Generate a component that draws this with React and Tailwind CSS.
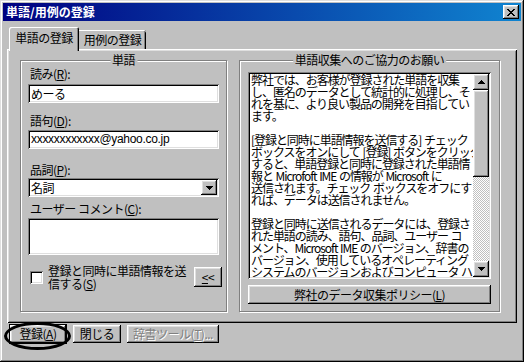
import React from 'react';

const raised =
  'bg-[#c0c0c0] shadow-[inset_-1px_-1px_#000,inset_1px_1px_#fff,inset_-2px_-2px_#808080,inset_2px_2px_#dfdfdf]';
const sunken =
  'bg-white shadow-[inset_1px_1px_#808080,inset_-1px_-1px_#fff,inset_2px_2px_#000,inset_-2px_-2px_#dfdfdf]';
const etched = 'relative border border-[#808080] shadow-[inset_1px_1px_#fff,1px_1px_#fff]';

const lines = [
  '弊社では、お客様が登録された単語を収集',
  'し、匿名のデータとして統計的に処理し、そ',
  'れを基に、より良い製品の開発を目指してい',
  'ます。',
  '',
  '[登録と同時に単語情報を送信する] チェック',
  'ボックスをオンにして [登録] ボタンをクリック',
  'すると、単語登録と同時に登録された単語情',
  '報と Microfoft IME の情報が Microsoft に',
  '送信されます。チェック ボックスをオフにす',
  'れば、データは送信されません。',
  '',
  '登録と同時に送信されるデータには、登録さ',
  'れた単語の読み、語句、品詞、ユーザー コ',
  'メント、Microsoft IME のバージョン、辞書の',
  'バージョン、使用しているオペレーティング',
  'システムのバージョンおよびコンピュータ ハ',
];

function CloseGlyph() {
  const px = [
    [0, 0], [1, 0], [6, 0], [7, 0],
    [1, 1], [2, 1], [5, 1], [6, 1],
    [2, 2], [3, 2], [4, 2], [5, 2],
    [3, 3], [4, 3],
    [2, 4], [3, 4], [4, 4], [5, 4],
    [1, 5], [2, 5], [5, 5], [6, 5],
    [0, 6], [1, 6], [6, 6], [7, 6],
  ];
  return (
    <svg width="8" height="7" viewBox="0 0 8 7" shapeRendering="crispEdges">
      {px.map(([x, y]) => (
        <rect key={`${x}-${y}`} x={x} y={y} width="1" height="1" fill="#000" />
      ))}
    </svg>
  );
}

function Arrow({ down }) {
  return (
    <svg width="7" height="4" viewBox="0 0 7 4" shapeRendering="crispEdges">
      <polygon points={down ? '0,0 7,0 3.5,4' : '3.5,0 7,4 0,4'} fill="#000" />
    </svg>
  );
}

function GroupTitle({ children }) {
  return (
    <span className="absolute top-[-8px] left-1/2 -translate-x-1/2 bg-[#c0c0c0] px-[2px] leading-[14px] whitespace-nowrap">
      {children}
    </span>
  );
}

export default function App() {
  return (
    <div className="w-[524px] h-[362px] bg-[#c0c0c0] p-[3px] flex flex-col relative overflow-hidden text-black text-[12px] tracking-[-0.5px] font-['Noto_Sans_CJK_JP',sans-serif] shadow-[inset_-1px_-1px_#000,inset_1px_1px_#dfdfdf,inset_-2px_-2px_#808080,inset_2px_2px_#fff]">
      {/* title bar */}
      <div className="h-[18px] flex items-center justify-between pl-[3px] pr-[2px] bg-[linear-gradient(to_right,#000080,#1084d0)]">
        <span className="text-white font-bold leading-[18px] tracking-[0px]">単語/用例の登録</span>
        <button className={`w-[16px] h-[14px] flex items-center justify-center ${raised}`}>
          <CloseGlyph />
        </button>
      </div>

      {/* tabs */}
      <div className="mt-[6px] mx-[4px] h-[22px] pl-[2px] flex items-end relative z-10">
        <div className="w-[70px] h-[24px] -mb-[2px] bg-[#c0c0c0] rounded-t-[2px] flex justify-center pt-[4px] leading-[14px] shadow-[inset_1px_1px_#fff,inset_-1px_0_#000,inset_-2px_0_#808080]">
          単語の登録
        </div>
        <div className="w-[67px] h-[19px] bg-[#c0c0c0] rounded-tr-[2px] flex justify-center pt-[3px] leading-[14px] shadow-[inset_0_1px_#fff,inset_-1px_0_#000,inset_-2px_0_#808080]">
          用例の登録
        </div>
      </div>

      {/* panel */}
      <div className="mx-[4px] h-[274px] bg-[#c0c0c0] flex pl-[13px] pt-[11px] gap-[12px] shadow-[inset_1px_1px_#fff,inset_-1px_-1px_#000,inset_2px_2px_#dfdfdf,inset_-2px_-2px_#808080]">
        {/* left group */}
        <div className={`${etched} w-[207px] h-[252px] px-[7px] flex flex-col`}>
          <GroupTitle>単語</GroupTitle>
          <label className="mt-[6px] pl-[2px] leading-[14px]">
            読み(<u>R</u>):
          </label>
          <div className={`${sunken} mt-[3px] h-[19px] pl-[3px] leading-[19px]`}>めーる</div>
          <label className="mt-[11px] pl-[2px] leading-[14px]">
            語句(<u>D</u>):
          </label>
          <div className={`${sunken} mt-[2px] h-[19px] pl-[3px] leading-[19px] tracking-[-0.3px] font-['Liberation_Sans',sans-serif]`}>
            xxxxxxxxxxxx@yahoo.co.jp
          </div>
          <label className="mt-[14px] pl-[2px] leading-[14px]">
            品詞(<u>P</u>):
          </label>
          <div className={`${sunken} mt-[1px] h-[19px] pl-[3px] pr-[2px] py-[2px] flex items-center justify-between`}>
            <span className="leading-[15px]">名詞</span>
            <div className={`w-[16px] h-[15px] flex items-center justify-center ${raised}`}>
              <Arrow down />
            </div>
          </div>
          <label className="mt-[5px] pl-[2px] leading-[14px]">
            ユーザー コメント(<u>C</u>):
          </label>
          <div className={`${sunken} mt-[2px] h-[37px]`} />
          <div className="mt-[9px] flex items-center">
            <div className={`${sunken} ml-[2px] w-[13px] h-[13px] shrink-0`} />
            <span className="ml-[5px] leading-[13px]">
              登録と同時に単語情報を送
              <br />
              信する(<u>S</u>)
            </span>
            <button className={`${raised} ml-auto -mr-[3px] w-[28px] h-[20px] leading-[18px]`}>
              <u>&lt;</u>&lt;
            </button>
          </div>
        </div>

        {/* right group */}
        <div className={`${etched} w-[261px] h-[252px] px-[8px] pt-[11px] flex flex-col`}>
          <GroupTitle>単語収集へのご協力のお願い</GroupTitle>
          <div className={`${sunken} bg-[#c0c0c0] h-[207px] p-[2px] flex`}>
            <div className="flex-1 overflow-hidden pl-[1px] tracking-[-1.05px] [word-spacing:1px]">
              {lines.map((l, i) => (
                <div key={i} className="h-[12px] leading-[12px] whitespace-nowrap">
                  {l}
                </div>
              ))}
            </div>
            <div className="w-[16px] flex flex-col">
              <div className={`${raised} h-[16px] flex items-center justify-center`}>
                <Arrow />
              </div>
              <div className={`${raised} h-[87px]`} />
              <div className="flex-1 bg-[repeating-conic-gradient(#fff_0_25%,#c0c0c0_0_50%)] bg-[length:2px_2px]" />
              <div className={`${raised} h-[16px] flex items-center justify-center`}>
                <Arrow down />
              </div>
            </div>
          </div>
          <button className={`${raised} mt-[6px] h-[19px] leading-[19px] text-center`}>
            弊社のデータ収集ポリシー(<u>L</u>)
          </button>
        </div>
      </div>

      {/* bottom buttons */}
      <div className="mt-[2px] pl-[7px] flex gap-[7px]">
        <button className={`${raised} w-[56px] h-[18px] leading-[18px] outline outline-1 outline-black`}>
          登録(<u>A</u>)
        </button>
        <button className={`${raised} w-[48px] h-[18px] leading-[18px]`}>閉じる</button>
        <button className={`${raised} -ml-[1px] w-[92px] h-[18px] leading-[18px] text-[#808080] [text-shadow:1px_1px_#fff]`}>
          辞書ツール(<u>T</u>)...
        </button>
      </div>

      {/* annotation ellipse */}
      <div className="absolute left-[4px] top-[322px] w-[67px] h-[28px] rounded-[50%] border-[3px] border-black pointer-events-none" />
    </div>
  );
}
